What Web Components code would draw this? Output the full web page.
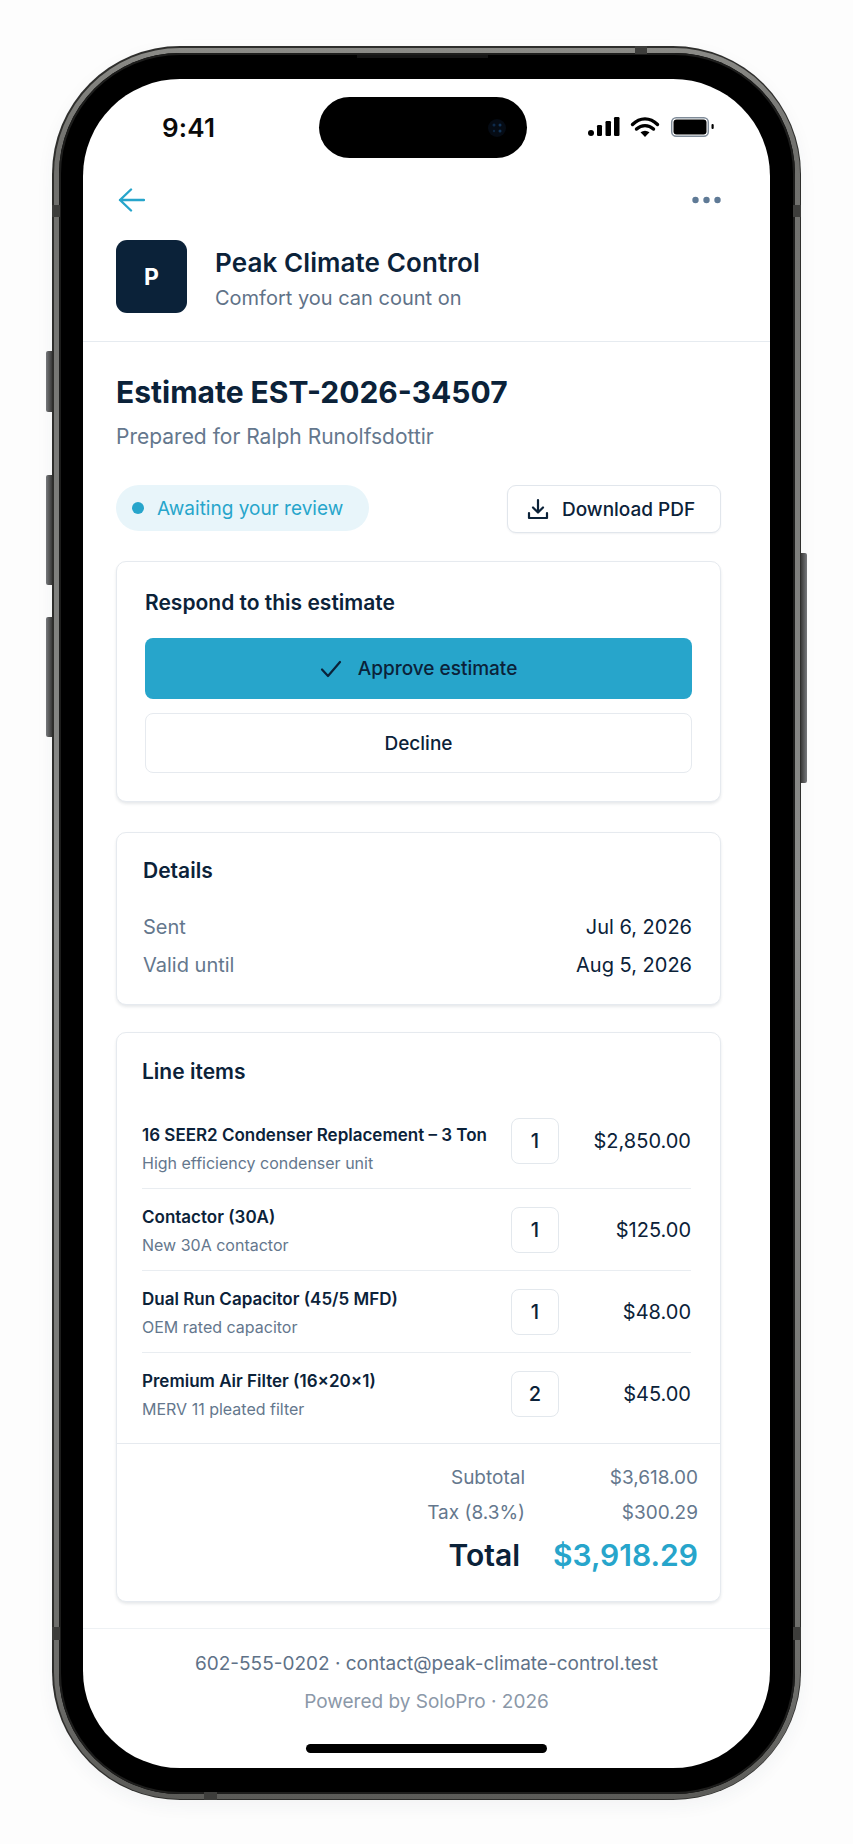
<!DOCTYPE html>
<html lang="en">
<head>
<meta charset="utf-8">
<title>Estimate EST-2026-34507</title>
<style>
  html, body { margin: 0; background: #fdfdfd; }
  body { font-family: Inter, "Liberation Sans", sans-serif; color: #0b2239; height: 1844px; overflow: hidden; }
</style>
</head>
<body>
<phone-frame>
  <status-bar></status-bar>
  <top-nav></top-nav>
  <brand-header name="Peak Climate Control" tagline="Comfort you can count on" initial="P"></brand-header>
  <estimate-body>
    <estimate-title number="Estimate EST-2026-34507" client="Prepared for Ralph Runolfsdottir"></estimate-title>
    <estimate-actions status="Awaiting your review"></estimate-actions>
    <respond-card></respond-card>
    <details-card>
      <detail-row label="Sent" value="Jul 6, 2026"></detail-row>
      <detail-row label="Valid until" value="Aug 5, 2026"></detail-row>
    </details-card>
    <items-card>
      <line-item style="--qty-top:-5px" name="16 SEER2 Condenser Replacement – 3 Ton" note="High efficiency condenser unit" qty="1" price="$2,850.00"></line-item>
      <line-item name="Contactor (30A)" note="New 30A contactor" qty="1" price="$125.00"></line-item>
      <line-item name="Dual Run Capacitor (45/5 MFD)" note="OEM rated capacitor" qty="1" price="$48.00"></line-item>
      <line-item last name="Premium Air Filter (16x20x1)" note="MERV 11 pleated filter" qty="2" price="$45.00"></line-item>
      <total-rows slot="totals"></total-rows>
    </items-card>
  </estimate-body>
  <page-footer></page-footer>
</phone-frame>

<script>
// tiny helper, every element just stamps its own shadow markup
function shadow(el, html) {
  el.attachShadow({ mode: 'open' }).innerHTML = html;
}

class PhoneFrame extends HTMLElement {
  constructor() {
    super();
    shadow(this, `
      <style>
        :host { display: block; position: relative; width: 749px; height: 1754px; margin: 46px 0 0 52px; }
        .rim { height: 100%; box-sizing: border-box; padding: 1.5px; border-radius: 128px; background: #2e2e2c;
          box-shadow: 0 6px 18px rgba(40, 60, 80, .05); }
        .metal { height: 100%; box-sizing: border-box; padding: 5px; border-radius: 126px;
          background: linear-gradient(180deg, #8b8b87 0, #6f6f6c 6%, #8d8e8c 50%, #6c6c69 94%, #5b5b58 100%); }
        .black { height: 100%; box-sizing: border-box; padding: 26.5px 24.5px 25.5px 24.5px; border-radius: 121px; background: #000;
          box-shadow: inset 0 0 0 2px #1d1d1c; }
        .screen { height: 100%; border-radius: 97px; background: #fff; overflow: hidden; display: flex; flex-direction: column; position: relative; }
        .side { position: absolute; width: 6px; background: linear-gradient(90deg, #77797c, #3a3a39); }
        .l { left: -6px; border-radius: 2px 0 0 2px; }
        .r { right: -6px; border-radius: 0 2px 2px 0; background: linear-gradient(270deg, #77797c, #3a3a39); }
        .band { position: absolute; background: #3d3d3b; }
        .island { position: absolute; left: 236px; top: 18px; width: 208px; height: 61px; border-radius: 31px; background: #000; }
        .island svg { position: absolute; left: 168px; top: 21px; }
        .home { position: absolute; left: 223px; top: 1665px; width: 241px; height: 9px; border-radius: 5px; background: #000; }
        .speaker { position: absolute; left: 305px; top: 9px; width: 131px; height: 3px; background: #141414; }
      </style>
      <div class="side l" style="top:305px;height:61px"></div>
      <div class="side l" style="top:429px;height:110px"></div>
      <div class="side l" style="top:571px;height:120px"></div>
      <div class="side r" style="top:507px;height:230px"></div>
      <div class="rim"><div class="metal"><div class="black"><div class="screen">
        <slot></slot>
        <div class="island">
          <svg width="20" height="20" viewBox="0 0 20 20"><circle cx="10" cy="10" r="9" fill="#050b14"/><circle cx="7" cy="7" r="1.5" fill="#0e2a4a"/><circle cx="13" cy="7" r="1.5" fill="#123458"/><circle cx="13" cy="13" r="1.5" fill="#123458"/><circle cx="7" cy="13" r="1.2" fill="#0c2440"/></svg>
        </div>
        <div class="home"></div>
      </div></div></div></div>
      <div class="speaker"></div>
      <div class="band" style="left:0;top:159px;width:8px;height:12px"></div>
      <div class="band" style="right:0;top:159px;width:8px;height:12px"></div>
      <div class="band" style="left:0;top:1581px;width:8px;height:13px"></div>
      <div class="band" style="right:0;top:1581px;width:8px;height:13px"></div>
      <div class="band" style="left:583px;top:0;width:12px;height:8px"></div>
      <div class="band" style="left:152px;bottom:0;width:13px;height:8px"></div>
    `);
  }
}

class StatusBar extends HTMLElement {
  constructor() {
    super();
    shadow(this, `
      <style>
        :host { display: flex; flex: none; height: 96px; align-items: center; justify-content: space-between; padding: 0 56px 0 79px; }
        .time { font-size: 26px; font-weight: 600; color: #0a0a0a; letter-spacing: .2px; }
      </style>
      <span class="time">9:41</span>
      <svg width="126" height="22" viewBox="588 116 126 22">
        <rect x="588" y="130" width="6" height="6" rx="3" fill="#000"/>
        <rect x="597" y="125" width="5" height="11" rx="1.2" fill="#000"/>
        <rect x="605.5" y="121" width="5.5" height="15" rx="1.2" fill="#000"/>
        <rect x="614" y="117" width="5.5" height="19" rx="1.2" fill="#000"/>
        <path d="M632.5 124.5 C640 117 650 117 657.5 124.5 M636.5 129 C641.5 124.5 648.5 124.5 653.5 129" fill="none" stroke="#000" stroke-width="3.4" stroke-linecap="round"/>
        <path d="M640.5 132.3 C643.5 130.3 646.5 130.3 649.5 132.3 L645 137 Z" fill="#000"/>
        <rect x="671.7" y="117.7" width="36.6" height="18.6" rx="4.5" fill="none" stroke="#7f8b98" stroke-width="1.5"/>
        <rect x="673.5" y="119.5" width="33" height="15" rx="3" fill="#000"/>
        <rect x="711.5" y="124" width="2.2" height="5" rx="1" fill="#000"/>
      </svg>
    `);
  }
}

class TopNav extends HTMLElement {
  constructor() {
    super();
    shadow(this, `
      <style>
        :host { display: flex; flex: none; height: 50px; align-items: center; justify-content: space-between; padding: 0 49px 0 35px; }
        svg { display: block; }
      </style>
      <svg width="27" height="24" viewBox="0 0 27 24" fill="none" stroke="#27a5cb" stroke-width="2.4" stroke-linecap="round" stroke-linejoin="round">
        <path d="M26 12H2M13 1.5 2 12l11 10.5"/>
      </svg>
      <svg width="29" height="8" viewBox="0 0 29 8" fill="#5f7a96">
        <circle cx="3.5" cy="4" r="3.2"/><circle cx="14.5" cy="4" r="3.2"/><circle cx="25.5" cy="4" r="3.2"/>
      </svg>
    `);
  }
}

class BrandHeader extends HTMLElement {
  constructor() {
    super();
    shadow(this, `
      <style>
        :host { display: flex; flex: none; height: 116px; box-sizing: content-box; padding-left: 33px; border-bottom: 1px solid #e6ebf0; }
        .logo { width: 71px; height: 73px; margin-top: 15px; margin-right: 28px; border-radius: 11px; background: #0b2239; color: #fff;
          display: flex; align-items: center; justify-content: center; font-size: 23px; font-weight: 700; }
        .name { font-size: 26px; font-weight: 600; line-height: 34px; margin-top: 21px; color: #0b2239; letter-spacing: .1px; }
        .tag { font-size: 20px; line-height: 30px; margin-top: 3px; color: #5f7288; }
      </style>
      <div class="logo">${this.getAttribute('initial')}</div>
      <div>
        <div class="name">${this.getAttribute('name')}</div>
        <div class="tag">${this.getAttribute('tagline')}</div>
      </div>
    `);
  }
}

class EstimateBody extends HTMLElement {
  constructor() {
    super();
    shadow(this, `
      <style>
        :host { display: flex; flex: none; flex-direction: column; padding: 30px 49px 0 33px; }
      </style>
      <slot></slot>
    `);
  }
}

class EstimateTitle extends HTMLElement {
  constructor() {
    super();
    shadow(this, `
      <style>
        :host { display: block; }
        h1 { margin: 0; font-size: 30px; line-height: 40px; font-weight: 700; color: #0b2239; }
        p { margin: 11px 0 0; font-size: 21px; line-height: 28px; color: #64778d; }
      </style>
      <h1>${this.getAttribute('number')}</h1>
      <p>${this.getAttribute('client')}</p>
    `);
  }
}

class EstimateActions extends HTMLElement {
  constructor() {
    super();
    shadow(this, `
      <style>
        :host { display: flex; justify-content: space-between; align-items: flex-start; margin-top: 34px; height: 48px; }
        .pill { display: flex; align-items: center; gap: 13px; height: 46px; width: 253px; box-sizing: border-box; padding-left: 16px; border-radius: 23px;
          background: #e8f5fa; color: #27a5cb; font-size: 19px; }
        .pill i { width: 12px; height: 12px; border-radius: 50%; background: #27a5cb; }
        .btn { display: flex; align-items: center; gap: 13px; width: 214px; height: 48px; box-sizing: border-box; padding-left: 19px; border: 1px solid #e1e6ec; border-radius: 9px;
          background: #fff; color: #0b2239; font-size: 19px; font-weight: 500; box-shadow: 0 1px 2px rgba(20, 40, 60, .06); }
      </style>
      <div class="pill"><i></i>${this.getAttribute('status')}</div>
      <div class="btn">
        <svg width="22" height="22" viewBox="0 0 22 22" fill="none" stroke="#0b2239" stroke-width="2.2" stroke-linecap="round" stroke-linejoin="round">
          <path d="M11 2v12M6 9.5l5 5 5-5M2 15v5h18v-5"/>
        </svg>
        Download PDF
      </div>
    `);
  }
}

class CardBox extends HTMLElement {
  static css = `
    :host { display: block; box-sizing: border-box; border: 1px solid #e6eaef; border-radius: 10px; background: #fff;
      box-shadow: 0 2px 3px rgba(20, 40, 60, .1); }
    h2 { margin: 0; font-size: 21px; font-weight: 600; color: #0b2239; }
  `;
}

class RespondCard extends CardBox {
  constructor() {
    super();
    shadow(this, `
      <style>
        ${CardBox.css}
        :host { margin-top: 28px; height: 241px; padding: 27px 28px 0; }
        h2 { line-height: 28px; }
        .b { display: flex; align-items: center; justify-content: center; gap: 16px; border-radius: 8px; font-size: 19px; font-weight: 500; color: #0b2239; }
        .ok { height: 61px; margin-top: 21px; background: #27a5cb; }
        .no { height: 60px; margin-top: 14px; box-sizing: border-box; border: 1px solid #e6eaef; }
      </style>
      <h2>Respond to this estimate</h2>
      <div class="b ok">
        <svg width="22" height="18" viewBox="0 0 22 18" fill="none" stroke="#0b2239" stroke-width="2.2" stroke-linecap="round" stroke-linejoin="round"><path d="M2 9.5 8 16 20 2"/></svg>
        Approve estimate
      </div>
      <div class="b no">Decline</div>
    `);
  }
}

class DetailsCard extends CardBox {
  constructor() {
    super();
    shadow(this, `
      <style>
        ${CardBox.css}
        :host { margin-top: 30px; height: 173px; padding: 25px 28px 0 26px; }
        h2 { line-height: 26px; margin-bottom: 24px; }
      </style>
      <h2>Details</h2>
      <slot></slot>
    `);
  }
}

class DetailRow extends HTMLElement {
  constructor() {
    super();
    shadow(this, `
      <style>
        :host { display: flex; justify-content: space-between; align-items: center; height: 38px; font-size: 20px; }
        .k { color: #64778d; }
        .v { color: #0b2239; }
      </style>
      <span class="k">${this.getAttribute('label')}</span>
      <span class="v">${this.getAttribute('value')}</span>
    `);
  }
}

class ItemsCard extends CardBox {
  constructor() {
    super();
    shadow(this, `
      <style>
        ${CardBox.css}
        :host { margin-top: 27px; height: 570px; }
        .items { padding: 26px 29px 0 25px; }
        h2 { line-height: 26px; margin-bottom: 22px; }
      </style>
      <div class="items">
        <h2>Line items</h2>
        <slot></slot>
      </div>
      <slot name="totals"></slot>
    `);
  }
}

class LineItem extends HTMLElement {
  constructor() {
    super();
    const last = this.hasAttribute('last');
    shadow(this, `
      <style>
        :host { display: grid; grid-template-columns: 369px 48px 1fr; align-items: start; padding: 16px 0 ${last ? 22 : 13}px; ${last ? '' : 'border-bottom: 1px solid #e9edf1;'} }
        .n { font-size: 17px; line-height: 24px; font-weight: 600; color: #0b2239; white-space: nowrap; }
        .s { font-size: 16px; line-height: 24px; margin-top: 4px; color: #64778d; white-space: nowrap; }
        .q { margin-top: var(--qty-top, 2px); height: 46px; box-sizing: border-box; border: 1px solid #e3e8ed; border-radius: 8px; display: flex; align-items: center; justify-content: center;
          font-size: 20px; font-weight: 500; color: #0b2239; }
        .p { margin-top: var(--qty-top, 2px); height: 46px; display: flex; align-items: center; justify-content: flex-end; font-size: 20px; color: #0b2239; }
      </style>
      <div><div class="n">${this.getAttribute('name')}</div><div class="s">${this.getAttribute('note')}</div></div>
      <div class="q">${this.getAttribute('qty')}</div>
      <div class="p">${this.getAttribute('price')}</div>
    `);
  }
}

class TotalRows extends HTMLElement {
  constructor() {
    super();
    shadow(this, `
      <style>
        :host { display: block; border-top: 1px solid #e6eaef; padding: 16px 22px 0 0; }
        .r { display: flex; justify-content: flex-end; align-items: center; height: 35px; font-size: 19px; color: #64778d; }
        .r span:last-child { width: 173px; text-align: right; }
        .t { height: 50px; color: #0b2239; font-size: 30px; font-weight: 600; }
        .t span:last-child { width: 178px; color: #27a5cb; }
      </style>
      <div class="r"><span>Subtotal</span><span>$3,618.00</span></div>
      <div class="r"><span>Tax (8.3%)</span><span>$300.29</span></div>
      <div class="r t"><span>Total</span><span>$3,918.29</span></div>
    `);
  }
}

class PageFooter extends HTMLElement {
  constructor() {
    super();
    shadow(this, `
      <style>
        :host { display: block; flex: none; margin-top: 26px; padding-top: 21px; border-top: 1px solid #eef1f4; text-align: center; }
        .c { font-size: 19px; line-height: 28px; color: #5f7288; }
        .p { font-size: 19px; line-height: 28px; margin-top: 10px; color: #8b98a8; }
      </style>
      <div class="c">602-555-0202 · contact@peak-climate-control.test</div>
      <div class="p">Powered by SoloPro · 2026</div>
    `);
  }
}

customElements.define('phone-frame', PhoneFrame);
customElements.define('status-bar', StatusBar);
customElements.define('top-nav', TopNav);
customElements.define('brand-header', BrandHeader);
customElements.define('estimate-body', EstimateBody);
customElements.define('estimate-title', EstimateTitle);
customElements.define('estimate-actions', EstimateActions);
customElements.define('respond-card', RespondCard);
customElements.define('details-card', DetailsCard);
customElements.define('detail-row', DetailRow);
customElements.define('items-card', ItemsCard);
customElements.define('line-item', LineItem);
customElements.define('total-rows', TotalRows);
customElements.define('page-footer', PageFooter);
</script>
</body>
</html>
